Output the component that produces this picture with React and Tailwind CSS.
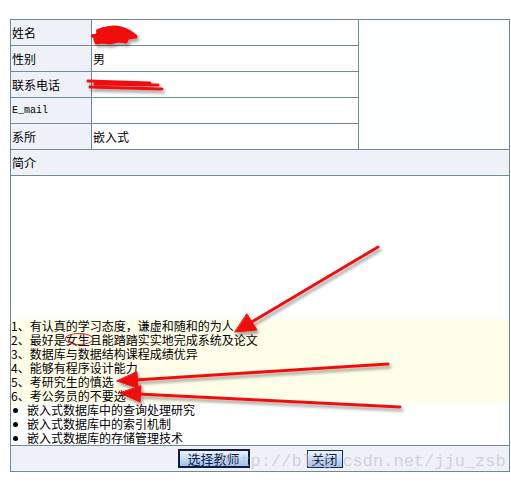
import React from 'react';

const cjk = { fontFamily: '"Noto Sans CJK SC", "Liberation Sans", sans-serif' };

const rows = [
  { label: '姓名', value: '' },
  { label: '性别', value: '男' },
  { label: '联系电话', value: '' },
  { label: 'E_mail', value: '', mono: true },
  { label: '系所', value: '嵌入式' },
];

const intro = [
  '1、有认真的学习态度，谦虚和随和的为人',
  '2、最好是女生且能踏踏实实地完成系统及论文',
  '3、数据库与数据结构课程成绩优异',
  '4、能够有程序设计能力',
  '5、考研究生的慎选',
  '6、考公务员的不要选',
];

const topics = ['嵌入式数据库中的查询处理研究', '嵌入式数据库中的索引机制', '嵌入式数据库的存储管理技术'];

const Annotations = () => (
  <svg className="absolute left-0 top-0 pointer-events-none" width="511" height="488" viewBox="0 0 511 488">
    <defs>
      <filter id="shade" x="-20%" y="-20%" width="140%" height="140%">
        <feDropShadow dx="2" dy="3" stdDeviation="1.8" floodColor="#000" floodOpacity="0.35" />
      </filter>
    </defs>
    <g filter="url(#shade)" fill="#f01010" stroke="#f01010" strokeLinecap="round" strokeLinejoin="round">
      {/* name scribble */}
      <path d="M95 39 C97 29 110 25 121 28 C128 30 133 33 136 37 L128 38 L126 42 L118 41 L110 43 L102 42 L96 43 Z" strokeWidth="3" />
      <path d="M93 36 L135 36 M98 31 C106 27 116 29 122 33" strokeWidth="4" fill="none" />
      {/* phone scribble */}
      <path d="M88 81 L150 83 M90 87 L162 89 M95 84 L158 85" strokeWidth="3" fill="none" />
      {/* arrow to line 1 */}
      <path d="M378 247 L250 323" strokeWidth="3" fill="none" />
      <polygon points="235,332 257,330 247,314" strokeWidth="1" />
      {/* arrow to line 5 */}
      <path d="M388 364 L135 380" strokeWidth="3" fill="none" />
      <polygon points="117,381 138,388 137,372" strokeWidth="1" />
      {/* arrow to line 6 */}
      <path d="M400 407 L138 394" strokeWidth="3" fill="none" />
      <polygon points="120,393 140,402 141,386" strokeWidth="1" />
    </g>
    <ellipse cx="79" cy="339" rx="14" ry="5.5" fill="none" stroke="#e02020" strokeWidth="1" />
  </svg>
);

export default function App() {
  return (
    <div className="relative w-[511px] h-[488px] bg-white overflow-hidden text-[12px] leading-[14px] text-black" style={cjk}>
      <div className="ml-[10px] mt-[19px] w-[500px] border border-[#6e8b99]">
        <div className="flex">
          <div className="w-[347px]">
            {rows.map((r) => (
              <div key={r.label} className="flex h-[26px] border-b border-[#6e8b99]">
                <div
                  className={`w-[81px] border-r border-[#6e8b99] bg-[#eef2f8] flex items-center pl-px ${r.mono ? 'text-[10px]' : ''}`}
                  style={r.mono ? { fontFamily: '"Liberation Mono", monospace' } : undefined}
                >
                  {r.label}
                </div>
                <div className="flex-1 flex items-center pl-px bg-white">{r.value}</div>
              </div>
            ))}
          </div>
          <div className="w-[151px] border-l border-b border-[#6e8b99] bg-[#fdfefe]" />
        </div>
        <div className="h-[26px] border-b border-[#6e8b99] bg-[#eef2f8] flex items-center pl-px">简介</div>
        <div className="h-[270px] border-b border-[#6e8b99] bg-white flex flex-col justify-end">
          <div className="bg-[#fefee9]">
            {intro.map((t) => (
              <div key={t} className="h-[14px] whitespace-nowrap">{t}</div>
            ))}
          </div>
          <ul>
            {topics.map((t) => (
              <li key={t} className="h-[14px] flex items-center whitespace-nowrap">
                <span className="w-[5px] h-[5px] rounded-full bg-black ml-[2px] mr-[9px]" />
                <span>{t}</span>
              </li>
            ))}
          </ul>
        </div>
        <div className="h-[25px] bg-[#eef2f8] flex items-center justify-center gap-[57px]">
          <button className="w-[72px] h-[19px] border-2 border-[#0c1e4e] bg-gradient-to-b from-[#eef4fd] to-[#9fc0ec] text-[13px] leading-[15px] text-[#0c1e4e] flex items-center justify-center">
            选择教师
          </button>
          <button className="w-[36px] h-[18px] border border-[#1e2e55] bg-gradient-to-b from-[#eef4fd] to-[#9fc0ec] text-[13px] leading-[15px] text-[#0c1e4e] flex items-center justify-center">
            关闭
          </button>
        </div>
      </div>
      <div
        className="absolute left-[220px] top-[452px] text-[17px] leading-[20px] text-[#c4c4c4]/70 pointer-events-none whitespace-nowrap"
        style={{ fontFamily: '"Liberation Mono", monospace' }}
      >
        http://blog.csdn.net/jju_zsb
      </div>
      <Annotations />
    </div>
  );
}
